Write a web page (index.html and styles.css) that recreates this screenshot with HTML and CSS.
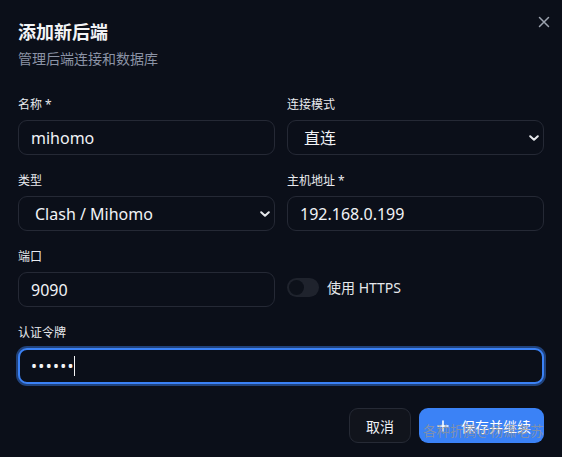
FILE: index.html
```html
<!DOCTYPE html>
<html lang="zh-CN">
<head>
<meta charset="utf-8">
<title>添加新后端</title>
<link rel="stylesheet" href="styles.css">
</head>
<body>
<div class="dialog">
  <button class="close" aria-label="关闭">
    <svg width="12" height="12" viewBox="0 0 12 12"><path d="M1.5 1.5 L10.5 10.5 M10.5 1.5 L1.5 10.5" stroke="currentColor" stroke-width="1.5" stroke-linecap="round" fill="none"/></svg>
  </button>
  <header class="head">
    <h2 class="title">添加新后端</h2>
    <p class="subtitle">管理后端连接和数据库</p>
  </header>
  <div class="form">
    <div class="grid">
      <div class="field">
        <label class="label">名称 *</label>
        <input class="input" type="text" value="mihomo">
      </div>
      <div class="field">
        <label class="label">连接模式</label>
        <div class="select-wrap">
          <select class="select"><option>直连</option></select>
          <svg class="chev" width="10" height="6" viewBox="0 0 10 6"><path d="M1.2 1.2 L5 4.8 L8.8 1.2" stroke="#e5e7eb" stroke-width="2" fill="none" stroke-linecap="round" stroke-linejoin="round"/></svg>
        </div>
      </div>
      <div class="field">
        <label class="label">类型</label>
        <div class="select-wrap">
          <select class="select"><option>Clash / Mihomo</option></select>
          <svg class="chev" width="10" height="6" viewBox="0 0 10 6"><path d="M1.2 1.2 L5 4.8 L8.8 1.2" stroke="#e5e7eb" stroke-width="2" fill="none" stroke-linecap="round" stroke-linejoin="round"/></svg>
        </div>
      </div>
      <div class="field">
        <label class="label">主机地址 *</label>
        <input class="input" type="text" value="192.168.0.199">
      </div>
      <div class="field">
        <label class="label">端口</label>
        <input class="input" type="text" value="9090">
      </div>
      <div class="field toggle-field">
        <div class="toggle-row">
          <span class="switch"><span class="knob"></span></span>
          <span class="toggle-text">使用 HTTPS</span>
        </div>
      </div>
    </div>
    <div class="field">
      <label class="label">认证令牌</label>
      <div class="input focused"><span class="dots">••••••</span><span class="caret"></span></div>
    </div>
  </div>
  <footer class="actions">
    <button class="btn btn-ghost">取消</button>
    <button class="btn btn-primary">
      <svg width="16" height="16" viewBox="0 0 16 16"><path d="M8 3 V13 M3 8 H13" stroke="#fff" stroke-width="1.6" stroke-linecap="round"/></svg>
      <span>保存并继续</span>
    </button>
  </footer>
  <span class="watermark">各种折腾@杨潇老苏</span>
</div>
</body>
</html>
```

FILE: styles.css
```css
* { box-sizing: border-box; }
html, body {
  margin: 0;
  padding: 0;
  background: #0b0f19;
}
body {
  font-family: "Noto Sans", "Open Sans", "Noto Sans CJK SC", sans-serif;
  color: #e5e7eb;
}
.dialog {
  position: relative;
  width: 562px;
  height: 457px;
  padding: 19px 18px 0 18px;
  background: #0b0f19;
  overflow: hidden;
}
.close {
  position: absolute;
  top: 16px;
  right: 12px;
  width: 12px;
  height: 12px;
  padding: 0;
  border: 0;
  background: none;
  color: #9ca3af;
  display: flex;
}
.head { display: flex; flex-direction: column; }
.title {
  margin: 0;
  font-size: 18px;
  line-height: 24px;
  font-weight: 700;
  color: #f3f4f6;
  font-family: "Noto Sans CJK SC", sans-serif;
}
.subtitle {
  margin: 5px 0 0;
  font-size: 14px;
  line-height: 20px;
  color: #8b93a5;
  font-family: "Noto Sans CJK SC", sans-serif;
}
.form {
  margin-top: 29px;
  display: flex;
  flex-direction: column;
  gap: 18px;
}
.grid {
  display: grid;
  grid-template-columns: 1fr 1fr;
  column-gap: 12px;
  row-gap: 18px;
}
.field {
  display: flex;
  flex-direction: column;
  gap: 7px;
}
.label {
  font-size: 12px;
  line-height: 16px;
  color: #e8eaee;
  font-family: "Noto Sans", "Noto Sans CJK SC", sans-serif;
}
.input, .select {
  height: 35px;
  width: 100%;
  border: 1px solid #252935;
  border-radius: 9px;
  background: #0b0f19;
  color: #f1f3f6;
  font-family: "Noto Sans", "Open Sans", "Noto Sans CJK SC", sans-serif;
  font-size: 16px;
  padding: 0 12px;
  outline: none;
}
.select-wrap { position: relative; }
.select {
  appearance: none;
  -webkit-appearance: none;
  padding: 0 16px;
}
.chev {
  position: absolute;
  right: 5px;
  top: 15px;
  pointer-events: none;
}
.toggle-field {
  padding-top: 23px;
}
.toggle-row {
  height: 35px;
  display: flex;
  align-items: center;
  gap: 8px;
  padding-bottom: 4px;
}
.switch {
  width: 32px;
  height: 19px;
  border-radius: 10px;
  background: #1f232d;
  display: flex;
  align-items: center;
  padding: 2px;
}
.knob {
  width: 15px;
  height: 15px;
  border-radius: 50%;
  background: #0d111a;
}
.toggle-text {
  font-size: 14px;
  line-height: 20px;
  color: #e5e7eb;
}
.focused {
  display: flex;
  align-items: center;
  height: 36px;
  border: 2px solid #3b82f6;
  box-shadow: 0 0 0 2px rgba(59, 130, 246, 0.45);
  padding: 0 11px;
}
.dots {
  font-size: 16px;
  line-height: 20px;
  letter-spacing: 1.3px;
  color: #f3f4f6;
}
.caret {
  width: 1px;
  height: 20px;
  background: #f3f4f6;
  margin-left: -1px;
}
.actions {
  margin-top: 24px;
  display: flex;
  justify-content: flex-end;
  gap: 8px;
}
.btn {
  height: 35px;
  border-radius: 9px;
  font-size: 14px;
  font-family: "Noto Sans CJK SC", sans-serif;
  display: flex;
  align-items: center;
  cursor: pointer;
}
.btn-ghost {
  background: #11141c;
  border: 1px solid #262a35;
  color: #eef0f4;
  padding: 0 16px;
}
.btn-primary {
  background: #3b82f6;
  border: 0;
  color: #fff;
  padding: 0 13px 0 16px;
  gap: 10px;
}
.watermark {
  position: absolute;
  left: 423px;
  top: 420px;
  font-size: 13.5px;
  line-height: 20px;
  color: rgba(150, 150, 150, 0.75);
  font-family: "Noto Sans CJK SC", sans-serif;
  pointer-events: none;
  white-space: nowrap;
}
```
